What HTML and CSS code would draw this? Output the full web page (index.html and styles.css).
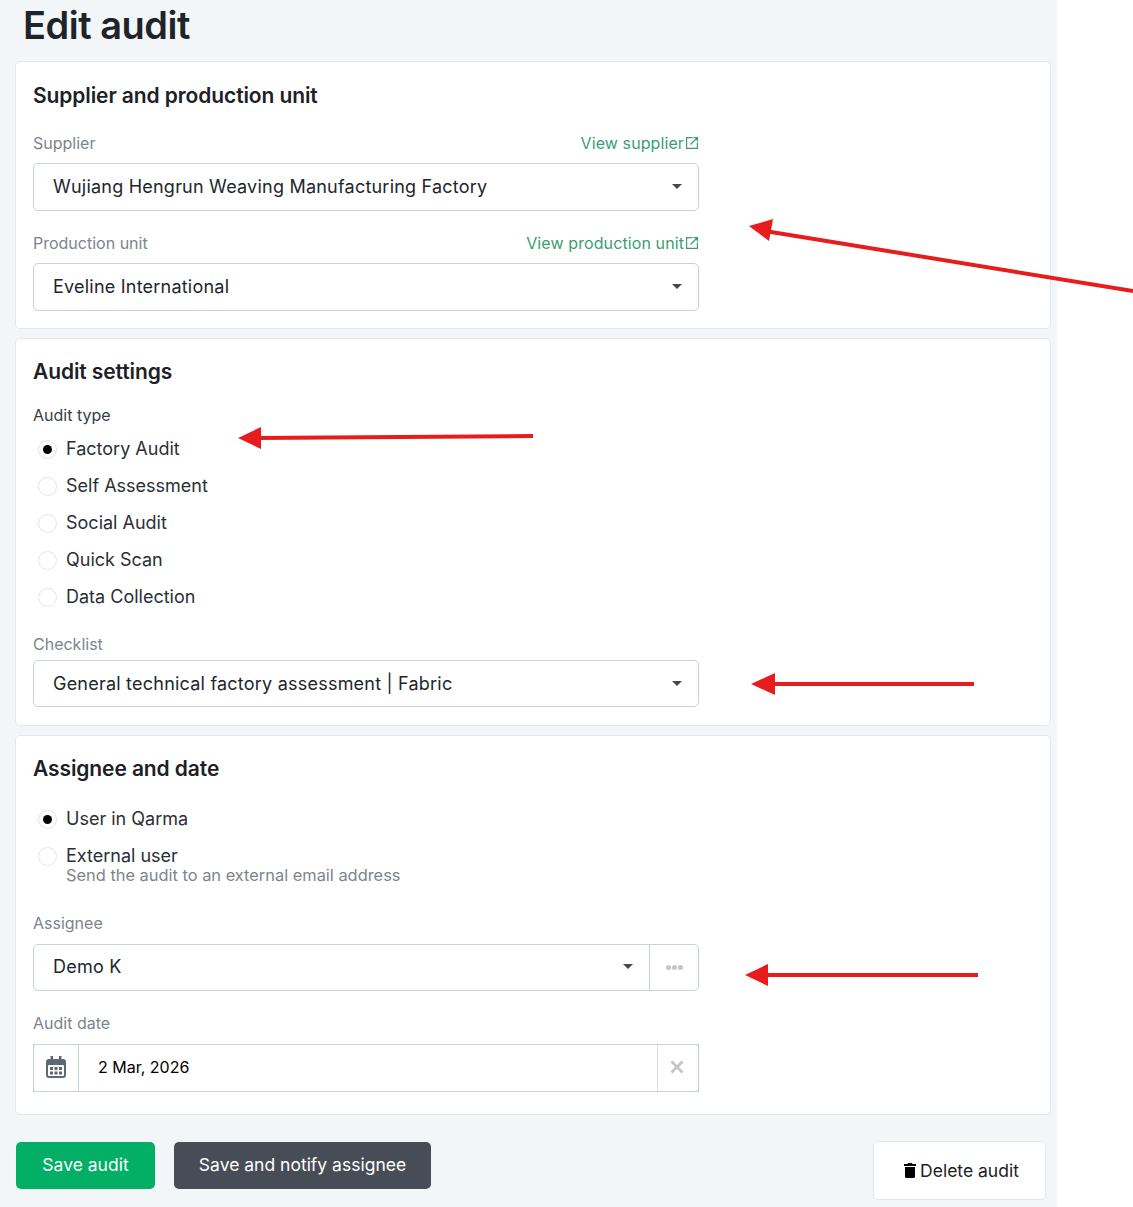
FILE: index.html
```html
<!DOCTYPE html>
<html lang="en">
<head>
  <meta charset="UTF-8">
  <meta name="viewport" content="width=device-width, initial-scale=1.0">
  <title>Edit audit</title>
  <link rel="stylesheet" href="styles.css">
</head>
<body>

  <div class="page">
    <h1>Edit audit</h1>

    <!-- Supplier -->
    <section class="card card-supplier">
      <h2>Supplier and production unit</h2>

      <div class="label-row">
        <span class="label">Supplier</span>
        <a class="link" href="#">View supplier<svg class="ext" viewBox="0 0 12 12"><path d="M6.500 .6H.6v10.800h10.800V5.500M4.500 7.500l6.500-6.500M7.500 .6h3.900v3.900" /></svg></a>
      </div>
      <div class="select">
        <span>Wujiang Hengrun Weaving Manufacturing Factory</span>
        <i class="caret"></i>
      </div>

      <div class="label-row second">
        <span class="label">Production unit</span>
        <a class="link" href="#">View production unit<svg class="ext" viewBox="0 0 12 12"><path d="M6.500 .6H.6v10.800h10.800V5.500M4.500 7.500l6.500-6.500M7.500 .6h3.900v3.900" /></svg></a>
      </div>
      <div class="select">
        <span>Eveline International</span>
        <i class="caret"></i>
      </div>
    </section>

    <!-- Audit settings -->
    <section class="card card-settings">
      <h2>Audit settings</h2>

      <div class="label-row dark-label">
        <span class="label">Audit type</span>
      </div>
      <div class="radio-list">
        <div class="radio-row"><i class="radio checked"></i><span>Factory Audit</span></div>
        <div class="radio-row"><i class="radio"></i><span>Self Assessment</span></div>
        <div class="radio-row"><i class="radio"></i><span>Social Audit</span></div>
        <div class="radio-row"><i class="radio"></i><span>Quick Scan</span></div>
        <div class="radio-row"><i class="radio"></i><span>Data Collection</span></div>
      </div>

      <div class="label-row checklist">
        <span class="label">Checklist</span>
      </div>
      <div class="select short">
        <span>General technical factory assessment | Fabric</span>
        <i class="caret"></i>
      </div>
    </section>

    <!-- Assignee -->
    <section class="card card-assignee">
      <h2>Assignee and date</h2>

      <div class="radio-list assignee-type">
        <div class="radio-row"><i class="radio checked"></i><span>User in Qarma</span></div>
        <div class="radio-row"><i class="radio"></i><span>External user</span></div>
        <div class="radio-help">Send the audit to an external email address</div>
      </div>

      <div class="label-row assignee-label">
        <span class="label">Assignee</span>
      </div>
      <div class="select short with-addon">
        <div class="select-main">
          <span>Demo K</span>
          <i class="caret"></i>
        </div>
        <div class="addon-dots"><i></i><i></i><i></i></div>
      </div>

      <div class="label-row date-label">
        <span class="label">Audit date</span>
      </div>
      <div class="date-input">
        <div class="date-inner">
          <div class="date-icon">
            <svg viewBox="0 0 20 22" width="20" height="22">
              <path fill="#5f6675" d="M3 3h1.500V0h2.500v3h6V0h2.500v3H17a3 3 0 0 1 3 3v13a3 3 0 0 1-3 3H3a3 3 0 0 1-3-3V6a3 3 0 0 1 3-3z" />
              <rect x="2" y="9" width="16" height="11" rx="1" fill="#fff" />
              <path fill="#5f6675" d="M4 11h3v3H4zM8.500 11h3v3h-3zM13 11h3v3h-3zM4 15.500h3v3H4zM8.500 15.500h3v3h-3zM13 15.500h3v3h-3z" />
            </svg>
          </div>
          <div class="date-value">2 Mar, 2026</div>
          <div class="date-clear">
            <svg viewBox="0 0 14 14" width="14" height="14"><path d="M1.500 1.500l11 11M12.500 1.500l-11 11" /></svg>
          </div>
        </div>
      </div>
    </section>

    <div class="actions">
      <button class="btn btn-save">Save audit</button>
      <button class="btn btn-notify">Save and notify assignee</button>
      <button class="btn btn-delete">
        <svg viewBox="0 0 12 15" width="12" height="15"><path d="M4 0h4l.5 1H12v2H0V1h3.500zM1 4h10v9.500a1.500 1.500 0 0 1-1.500 1.500h-7A1.500 1.500 0 0 1 1 13.500z" /></svg>
        Delete audit
      </button>
    </div>
  </div>

  <!-- Red annotation arrows drawn over the screenshot -->
  <svg class="arrows" width="1133" height="1207" viewBox="0 0 1133 1207">
    <path class="shaft" d="M1133 291L765 231" />
    <polygon points="749,226 773,219 769,241" />
    <path class="shaft" d="M533 436L255 438" />
    <polygon points="238,438 261,427 261,449" />
    <path class="shaft" d="M974 684L768 684" />
    <polygon points="751,684 775,673 775,695" />
    <path class="shaft" d="M978 975L762 975" />
    <polygon points="745,975 768,964 768,986" />
  </svg>

</body>
</html>
```

FILE: styles.css
```css
* {
  box-sizing: border-box;
}
body {
  margin: 0;
  background-color: #fff;
  font-family: Inter, "Open Sans", sans-serif;
  color: #1f2328;
}
.page {
  width: 1057px;
  height: 1207px;
  padding: 0 6px 0 15px;
  background-color: #f3f6f9;
  overflow: hidden;
}
h1 {
  margin: 0 0 0 8px;
  height: 61px;
  padding-top: 3px;
  font-size: 38px;
  line-height: 44px;
  font-weight: 600;
  letter-spacing: -0.5px;
  color: #1f2429;
}
.card {
  background-color: #fff;
  border: 1px solid #e4e8ec;
  border-radius: 5px;
  padding: 0 17px;
  margin-bottom: 9px;
}
.card-supplier {
  height: 268px;
}
.card-settings {
  height: 388px;
}
.card-assignee {
  height: 380px;
}
h2 {
  margin: 0;
  padding-top: 20px;
  height: 62px;
  font-size: 21px;
  line-height: 28px;
  font-weight: 600;
  letter-spacing: -0.1px;
  color: #1d2125;
}
.card-settings h2,
.card-assignee h2 {
  padding-top: 19px;
  height: 61px;
}
.label-row {
  display: flex;
  justify-content: space-between;
  align-items: center;
  width: 666px;
  height: 39px;
  padding-bottom: 2px;
  font-size: 16px;
  line-height: 36px;
}
.label {
  color: #7c858c;
}
.label-row.second {
  height: 52px;
  padding: 14px 0 2px;
}
.dark-label .label {
  color: #383e44;
}
.link {
  color: #3d9d72;
  text-decoration: none;
  display: flex;
  align-items: center;
  margin-right: 1px;
  letter-spacing: 0.1px;
}
.ext {
  width: 12px;
  height: 12px;
  margin-left: 2px;
  fill: none;
  stroke: #3d9d72;
  stroke-width: 1.200;
}
.select {
  display: flex;
  justify-content: space-between;
  align-items: center;
  width: 666px;
  height: 48px;
  padding: 0 16px 1px 19px;
  border: 1px solid #c6d1da;
  border-radius: 5px;
  font-size: 18px;
  letter-spacing: 0.22px;
  color: #22262b;
}
.short {
  height: 47px;
}
.caret {
  width: 0;
  height: 0;
  border-left: 5px solid transparent;
  border-right: 5px solid transparent;
  border-top: 5px solid #45494e;
}
.label-row.dark-label {
  height: 30px;
  padding: 0;
  line-height: 30px;
}
.radio-row {
  display: flex;
  align-items: center;
  height: 37px;
  padding-left: 5px;
  font-size: 18px;
  color: #2a3036;
}
.radio {
  flex: none;
  width: 19px;
  height: 19px;
  margin: 2px 9px 0 0;
  border: 1px solid #e2e5e8;
  border-radius: 50%;
  display: flex;
  align-items: center;
  justify-content: center;
}
.radio.checked::after {
  content: "";
  width: 9px;
  height: 9px;
  border-radius: 50%;
  background-color: #000;
}
.label-row.checklist {
  height: 45px;
  padding: 13px 0 0;
  line-height: 30px;
}
.assignee-type {
  padding-top: 3px;
}
.radio-help {
  margin: -9px 0 0 33px;
  font-size: 16.400px;
  line-height: 20px;
  color: #7c858c;
}
.label-row.assignee-label {
  height: 59px;
  padding: 17px 0 0;
  line-height: 42px;
}
.with-addon {
  padding: 0;
}
.select-main {
  flex: 1;
  display: flex;
  justify-content: space-between;
  align-items: center;
  height: 100%;
  padding: 0 16px 2px 19px;
  border-right: 1px solid #c6d1da;
}
.addon-dots {
  width: 48px;
  display: flex;
  justify-content: center;
  gap: 1px;
}
.addon-dots i {
  width: 5px;
  height: 5px;
  border-radius: 50%;
  background-color: #c4c6c8;
}
.label-row.date-label {
  height: 53px;
  padding: 11px 0 0;
  line-height: 40px;
}
/* corners of this one show green in the app */
.date-input {
  width: 666px;
  height: 48px;
  background-color: #a5e6a5;
}
.date-inner {
  display: flex;
  align-items: stretch;
  height: 100%;
  background-color: #fff;
  border: 1px solid #c6d1da;
  border-radius: 3px;
  overflow: hidden;
}
.date-icon {
  width: 45px;
  padding-bottom: 2px;
  display: flex;
  align-items: center;
  justify-content: center;
  border-right: 1px solid #c6d1da;
}
.date-value {
  flex: 1;
  padding-left: 19px;
  font-size: 16px;
  line-height: 44px;
  color: #000;
}
.date-clear {
  width: 41px;
  padding: 0 2px 2px 0;
  display: flex;
  align-items: center;
  justify-content: center;
  border-left: 1px solid #dcdfe2;
}
.date-clear path {
  stroke: #c2c4c6;
  stroke-width: 2.600;
  fill: none;
}
.actions {
  display: flex;
  align-items: flex-start;
  padding: 17px 0 0 1px;
}
.btn {
  border: none;
  border-radius: 5px;
  font-family: inherit;
  font-size: 17.500px;
  height: 47px;
  padding-bottom: 3px;
  cursor: pointer;
}
.btn-save {
  width: 139px;
  margin-top: 1px;
  background-color: #02af64;
  color: #fff;
}
.btn-notify {
  width: 257px;
  margin: 1px 0 0 19px;
  background-color: #474d56;
  color: #fff;
}
.btn-delete {
  display: flex;
  align-items: center;
  justify-content: center;
  gap: 4px;
  width: 173px;
  height: 59px;
  margin-left: auto;
  margin-right: 5px;
  padding: 0 0 1px 4px;
  background-color: #fff;
  border: 1px solid #e4e8ec;
  color: #1d2125;
}
.arrows {
  position: absolute;
  top: 0;
  left: 0;
  pointer-events: none;
}
.arrows .shaft {
  fill: none;
  stroke: #e71d1d;
  stroke-width: 4;
}
.arrows polygon {
  fill: #e71d1d;
}
```
